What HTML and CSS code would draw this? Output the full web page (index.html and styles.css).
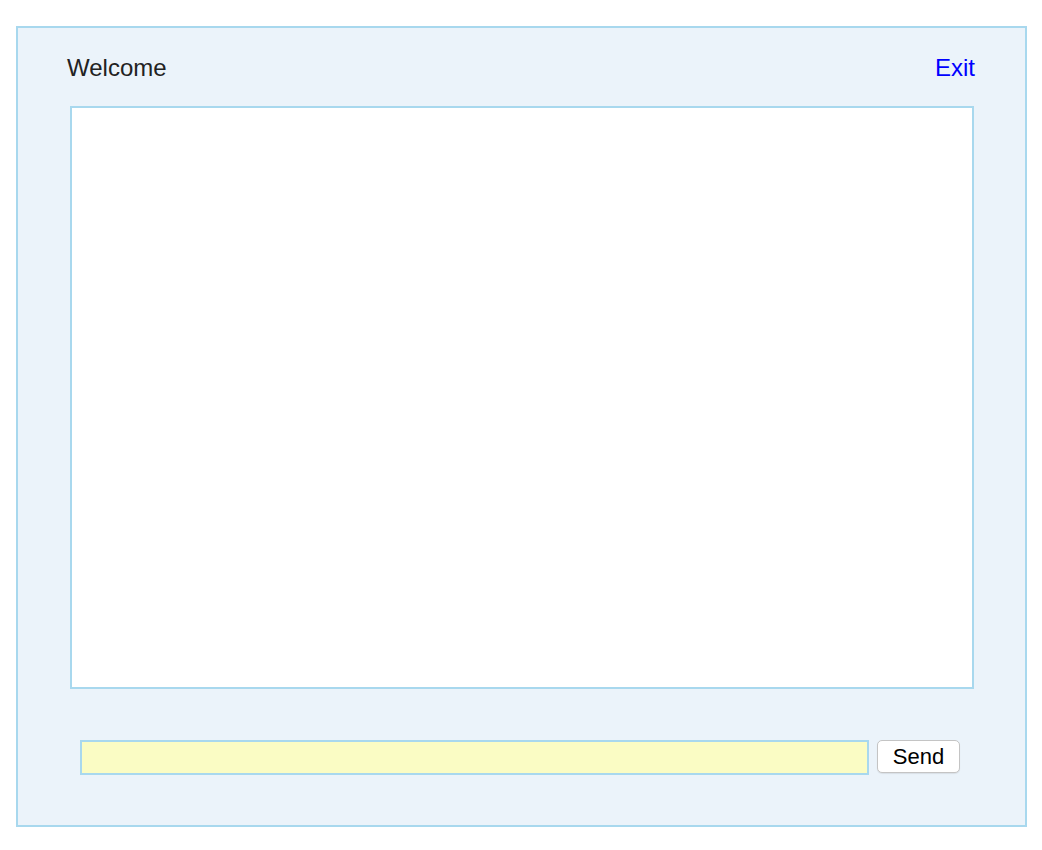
FILE: index.html
```html
<!DOCTYPE html>
<html>
<head>
<meta charset="utf-8">
<link rel="stylesheet" href="styles.css">
</head>
<body>
<div class="wrapper">
  <div class="header">
    <span class="welcome">Welcome</span>
    <a class="exit" href="#">Exit</a>
  </div>
  <div class="chatbox"></div>
  <div class="composer">
    <input class="msg" type="text">
    <button class="send">Send</button>
  </div>
</div>
</body>
</html>
```
FILE: styles.css
```css
html, body {
  margin: 0;
  padding: 0;
  background: #fff;
}
body {
  padding: 26px 0 0 16px;
  font-family: "Liberation Sans", Arial, Helvetica, sans-serif;
}
.wrapper {
  box-sizing: border-box;
  width: 1011px;
  height: 801px;
  border: 2px solid #a8d8ee;
  background: #ebf3fa;
}
.header {
  display: flex;
  justify-content: space-between;
  align-items: flex-start;
  height: 78px;
  box-sizing: border-box;
  padding: 26px 50px 0 49px;
  font-size: 24px;
  line-height: 28px;
}
.welcome {
  color: #222;
}
.exit {
  color: #0000ff;
  text-decoration: none;
}
.chatbox {
  box-sizing: border-box;
  margin-left: 52px;
  width: 904px;
  height: 583px;
  border: 2px solid #a8d8ee;
  background: #fff;
}
.composer {
  display: flex;
  align-items: flex-start;
  gap: 8px;
  margin-top: 51px;
  margin-left: 62px;
}
.msg {
  box-sizing: border-box;
  width: 789px;
  height: 35px;
  margin: 0;
  border: 2px solid #a8d8ee;
  background: #fafcc4;
  outline: none;
  padding: 0 4px;
}
.send {
  box-sizing: border-box;
  width: 83px;
  height: 33px;
  margin: 0;
  padding: 0;
  border: 1px solid #c4c4c4;
  border-radius: 5px;
  background: #fff;
  box-shadow: 0 1px 1px rgba(0,0,0,0.08);
  font-family: "Liberation Sans", Arial, Helvetica, sans-serif;
  font-size: 22px;
  color: #000;
}
```
